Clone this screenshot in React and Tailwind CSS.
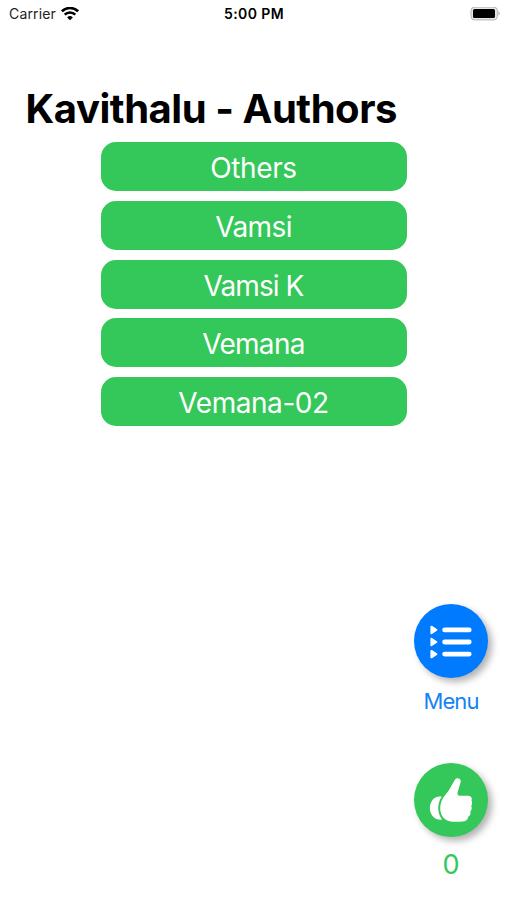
const authors = [
  { name: 'Others', spacing: 'tracking-[-0.4px]' },
  { name: 'Vamsi', spacing: 'tracking-[-0.6px]' },
  { name: 'Vamsi K', spacing: 'tracking-[-0.9px]' },
  { name: 'Vemana', spacing: 'tracking-[-0.7px]' },
  { name: 'Vemana-02', spacing: 'tracking-[-0.45px]' },
];

function WifiIcon() {
  return (
    <svg width="18" height="14" viewBox="0 0 18 14" fill="none" stroke="#000" strokeWidth="2.6">
      <path d="M0.9 4.3a11.6 11.6 0 0 1 16.2 0" />
      <path d="M3.7 7.7a7.5 7.5 0 0 1 10.6 0" />
      <path d="M9 13.3 6.1 10.4a4.1 4.1 0 0 1 5.8 0z" fill="#000" stroke="none" />
    </svg>
  );
}

function BatteryIcon() {
  return (
    <svg width="31" height="14" viewBox="0 0 31 14">
      <rect x="1" y="0.1" width="26.4" height="12.8" rx="3.6" fill="#e6e6e6" stroke="#b4b4b4" strokeWidth="1" />
      <rect x="3" y="2" width="22" height="9" rx="1.6" fill="#000" />
      <path d="M28.5 4.2c1.6.5 1.6 3.9 0 4.4z" fill="#a8a8a8" />
    </svg>
  );
}

function ListIcon() {
  return (
    <svg width="74" height="74" viewBox="0 0 74 74" fill="#fff">
      {[25.9, 38, 50.1].map((y) => (
        <g key={y} transform={`translate(0 ${y})`}>
          <path d="M17.4-3.2 22.3 0 17.4 3.2z" stroke="#fff" strokeWidth="2" strokeLinejoin="round" />
          <rect x="28.2" y="-2.4" width="29.4" height="4.8" rx="2.4" />
        </g>
      ))}
    </svg>
  );
}

function ThumbIcon() {
  return (
    <svg width="74" height="74" viewBox="0 0 74 74" fill="#fff">
      <path d="M27.8 33.6C20.6 32.2 15.9 38 15.9 45c0 7.2 4.9 12.6 12.2 11.6-4.9-6.4-5.2-15.8-.3-23z" />
      <path d="M26.2 45.2c0-5.6 2-9.8 5.4-13.7 2.2-2.5 3.9-5 5.3-7.7l3.8-6.8c1-1.7 2.4-2.1 3.9-1.6 1.8.6 2.5 2 2 3.9l-2.9 9.8c-.5 1.9-.2 3.6 1.6 3.7h9c2.9.1 4.2 2.4 3.2 4.6 1 1.7.8 4-.3 5.6 1 1.9.6 4.2-.9 5.5.6 2.1-.1 4-1.9 5.1-.5 3.4-2.8 4.9-5.8 5-2.8.2-5.8.3-9.2.2-8.2-.2-13.2-5.6-13.2-13.6z" />
    </svg>
  );
}

export default function App() {
  return (
    <div className="flex h-[900px] w-full flex-col overflow-hidden bg-white font-['Inter',sans-serif] text-black">
      {/* Status bar */}
      <header className="grid h-7 shrink-0 grid-cols-3 items-center pl-[9px] pr-[6px]">
        <div className="flex items-center gap-[5px]">
          <span className="text-[14px] leading-7 tracking-[0.15px] text-[#222]">Carrier</span>
          <WifiIcon />
        </div>
        <span className="-ml-[2px] text-center text-[14px] font-semibold leading-7 tracking-[0.4px]">5:00 PM</span>
        <div className="flex justify-end">
          <BatteryIcon />
        </div>
      </header>

      <main className="flex flex-col">
        <h1 className="pl-[25.5px] pt-[56px] text-[40px] font-bold leading-[50px] tracking-[-0.45px]">
          Kavithalu - Authors
        </h1>
        <div className="mx-auto mt-[8.4px] flex w-[306px] flex-col gap-[9.6px]">
          {authors.map((author) => (
            <button
              key={author.name}
              className={`h-[49px] rounded-[15px] bg-[#34c759] pt-[3px] text-[28px] leading-[46px] text-white ${author.spacing}`}
            >
              {author.name}
            </button>
          ))}
        </div>
      </main>

      {/* Floating actions */}
      <footer className="mt-auto flex flex-col items-center self-end pb-[17px] pr-[19px]">
        <button className="h-[74px] w-[74px] rounded-full bg-[#007aff] shadow-[4px_4px_7px_rgba(0,0,0,0.3)]">
          <ListIcon />
        </button>
        <span className="mt-[8px] text-[22px] leading-[30px] tracking-[-0.9px] text-[#1583f5]">Menu</span>
        <button className="mt-[47px] h-[74px] w-[74px] rounded-full bg-[#34c759] shadow-[4px_4px_7px_rgba(0,0,0,0.3)]">
          <ThumbIcon />
        </button>
        <span className="mt-[10px] text-[27px] leading-[36px] text-[#34c759]">0</span>
      </footer>
    </div>
  );
}
